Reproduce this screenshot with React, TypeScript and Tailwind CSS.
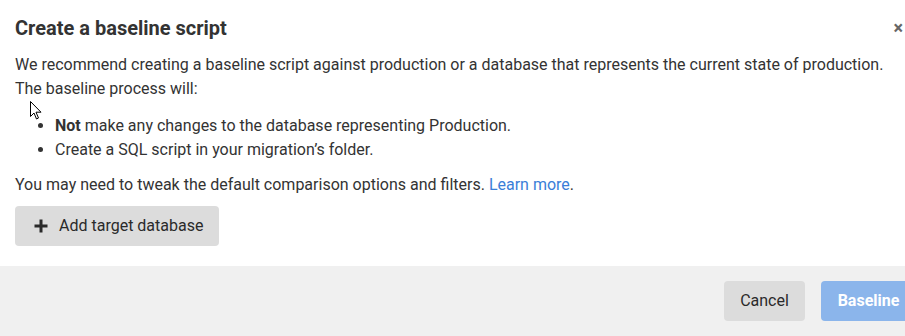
import React from "react";

const Cursor = () => (
  <svg width="12" height="19" viewBox="0 0 12 19" className="absolute left-[30px] top-[101px]">
    <path d="M0.5 0.5 L0.5 15.5 L4 12 L6.5 18 L8.5 17 L6 11.2 L11 11.2 Z" fill="#fff" stroke="#000" strokeWidth="1" />
  </svg>
);

const App = () => {
  return (
    <div className="w-[905px] h-[336px] overflow-hidden bg-white font-['Roboto',sans-serif] text-[#333]">
      <div className="relative w-[932px] flex flex-col">
        {/* header */}
        <div className="flex items-start justify-between pl-[15px] pr-[29px] pt-[15px]">
          <h1 className="text-[20px] font-bold leading-[26px] text-[#333]">Create a baseline script</h1>
          <button className="mt-[4px] text-[#666] text-[18px] leading-[18px] font-bold">×</button>
        </div>

        {/* body */}
        <div className="px-[15px] pt-[12px] text-[16px] leading-[24px]">
          <p>
            We recommend creating a baseline script against production or a database that represents the current state of
            production.
            <br />
            The baseline process will:
          </p>
          <ul className="list-disc pl-[40px] mt-[13px]">
            <li>
              <span className="font-bold">Not</span> make any changes to the database representing Production.
            </li>
            <li>Create a SQL script in your migration’s folder.</li>
          </ul>
          <p className="mt-[11px]">
            You may need to tweak the default comparison options and filters.{" "}
            <a href="#" className="text-[#3a7ed8]">Learn more</a>.
          </p>
          <button className="mt-[9px] h-[40px] w-[204px] flex items-center gap-[11px] pl-[19px] rounded-[4px] bg-[#dcdcdc] text-[16px] text-[#2a2a2a]">
            <svg width="14" height="14" viewBox="0 0 14 14">
              <path d="M7 0.5v13M0.5 7h13" stroke="#2a2a2a" strokeWidth="3" />
            </svg>
            Add target database
          </button>
        </div>

        {/* footer */}
        <div className="mt-[20px] h-[70px] bg-[#f0f0f0] flex items-center justify-end gap-[16px] pr-[16px]">
          <button className="h-[40px] w-[81px] rounded-[4px] bg-[#dcdcdc] text-[16px] text-[#2a2a2a]">Cancel</button>
          <button className="h-[40px] w-[95px] rounded-[4px] bg-[#8bb5eb] text-[16px] font-bold text-white">Baseline</button>
        </div>

        <Cursor />
      </div>
    </div>
  );
};

export default App;
